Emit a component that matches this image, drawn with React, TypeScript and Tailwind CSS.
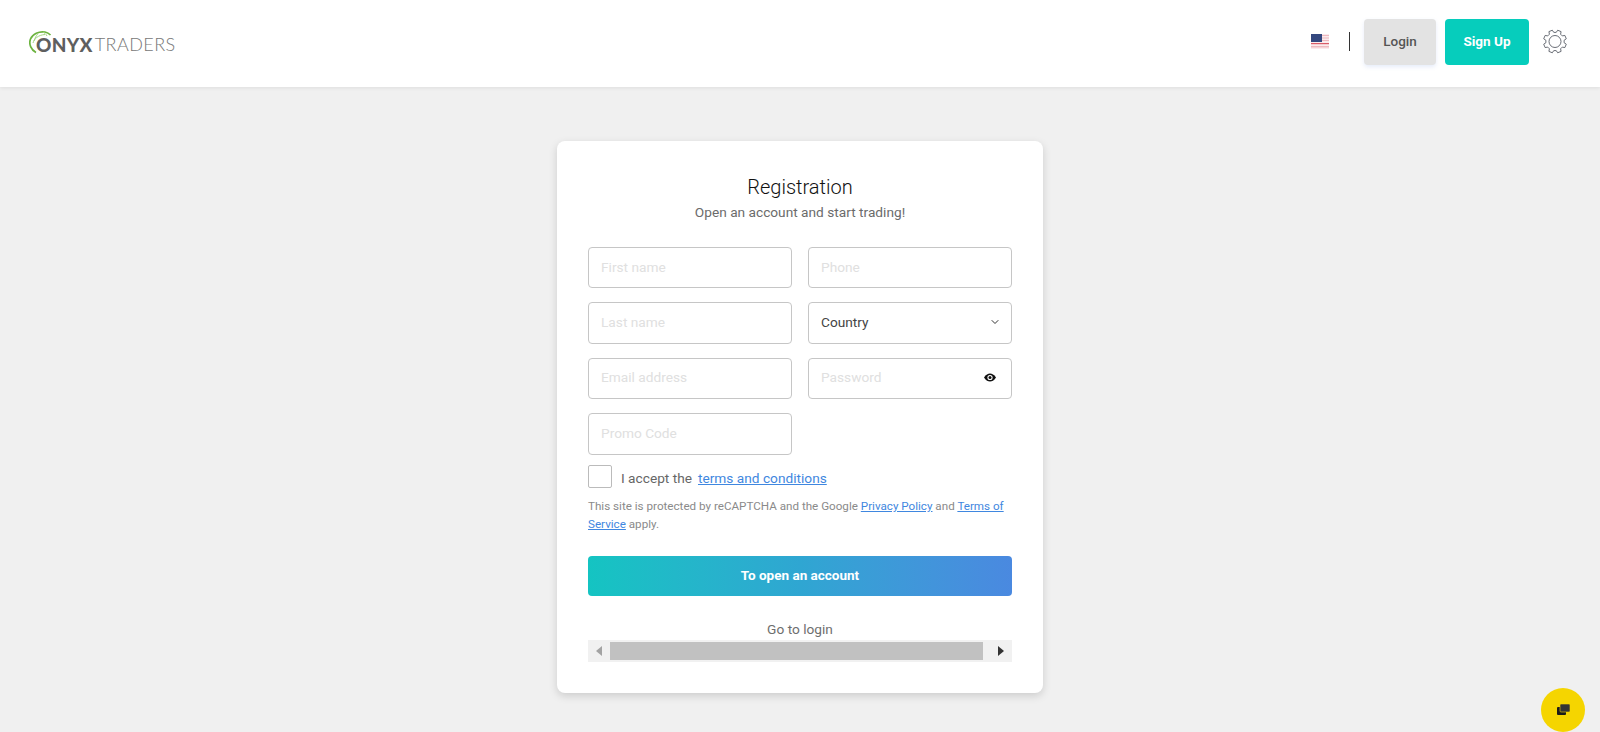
import { ChevronDown } from 'lucide-react';

const inputClass =
  'w-full h-[41.4px] rounded-[4px] border border-[#c6c6c6] bg-white px-3 pb-[2px] text-[13.7px] text-[#333] placeholder:text-[#e0e0e0] outline-none';

// 8 teeth gear outline, drawn around 12,12
const gearPoints = Array.from({ length: 8 }, (_, i) => {
  const a = (i * Math.PI) / 4 - Math.PI / 8;
  const pt = (r: number, d: number) =>
    `${(12 + r * Math.cos(a + d)).toFixed(2)} ${(12 + r * Math.sin(a + d)).toFixed(2)}`;
  return `${pt(9.2, -0.26)} L${pt(11.6, -0.16)} L${pt(11.6, 0.16)} L${pt(9.2, 0.26)}`;
}).join(' L');

function Gear() {
  return (
    <svg className="ml-[14px]" width="24" height="25" viewBox="0 0 24 24" fill="none" stroke="#5a5f68" strokeWidth="0.9" strokeLinejoin="round">
      <path d={`M${gearPoints} Z`} />
      <circle cx="12" cy="12" r="6" />
    </svg>
  );
}

function Logo() {
  return (
    <div className="relative flex items-center h-[24px] mt-[1px] pl-[7px] font-['Lato',sans-serif] text-[19px] leading-none">
      <svg className="absolute left-[0px] top-[-2px]" width="26" height="26" viewBox="0 0 26 26" fill="none">
        <path d="M7 22.500C2 20 -0.500 14 1.500 9 3.500 4 10 1 16 2c2.500 0.500 4 1.500 5.500 3" stroke="#6cb33f" strokeWidth="1.700" />
        <path d="M4 13c1-4 5-8 12-8.500M9 3.500C7 6 6 8 5 11M14 2c1.500 1 3 2 4 4" stroke="#a4d583" strokeWidth="1" />
      </svg>
      <span className="font-black text-[#5f5f5f] tracking-[0.3px]">ONYX</span>
      <span className="ml-[2px] text-[18px] font-light tracking-[0.45px] text-[#777]">TRADERS</span>
    </div>
  );
}

function Flag() {
  return (
    <svg width="18" height="15" viewBox="0 0 18 15">
      <rect width="18" height="15" fill="#fbeaec" />
      <rect y="1" width="18" height="1" fill="#eeb9bf" />
      <rect y="3.500" width="18" height="1" fill="#eeb9bf" />
      <rect y="6" width="18" height="1" fill="#eeb9bf" />
      <rect y="9" width="18" height="1.200" fill="#d95c68" />
      <rect y="12" width="18" height="1.500" fill="#eeb9bf" />
      <rect width="11" height="8" fill="#34487f" />
    </svg>
  );
}

function EyeIcon() {
  return (
    <svg className="absolute right-[16px] top-[14px]" width="12" height="11" viewBox="0 0 12 11">
      <path d="M0 5.500C2 2.500 4 1.500 6 1.500s4 1 6 4c-2 3-4 4-6 4s-4-1-6-4z" fill="#111" />
      <circle cx="6" cy="5.500" r="2.600" fill="#fff" />
      <circle cx="6" cy="5.500" r="1.500" fill="#111" />
    </svg>
  );
}

export default function App() {
  return (
    <div className="min-h-[732px] bg-[#f0f0f0] font-['Roboto',sans-serif] overflow-hidden">
      <header className="h-[87px] bg-white shadow-[0_1px_4px_rgba(0,0,0,0.08)] flex items-center pl-[29px] pr-[33px]">
        <Logo />
        <div className="ml-auto flex items-center mb-[4px]">
          <Flag />
          <div className="ml-[20px] h-[19px] w-px bg-[#333]" />
          <button className="ml-[14px] w-[72px] h-[46px] rounded-[4px] bg-[#e3e3e3] text-[13.5px] font-medium text-[#555] shadow-[0_2px_4px_rgba(90,130,220,0.15)]">
            Login
          </button>
          <button className="ml-[9px] w-[84px] h-[46px] rounded-[4px] bg-[#06cdbc] text-[13.5px] font-bold text-white">
            Sign Up
          </button>
          <Gear />
        </div>
      </header>

      <main className="flex justify-center pt-[54px]">
        <div className="w-[486px] h-[552px] rounded-[8px] bg-white px-[31px] pt-[34px] shadow-[0_3px_8px_rgba(0,0,0,0.15)]">
          <h1 className="text-center text-[20px] font-light leading-[24px] text-[#111]">Registration</h1>
          <p className="mt-[3px] text-center text-[13.7px] leading-[20px] text-[#6b6b6b]">
            Open an account and start trading!
          </p>

          <div className="mt-[25px] grid grid-cols-[204px_204px] gap-x-4 gap-y-[14px]">
            <input className={inputClass} placeholder="First name" />
            <input className={inputClass} placeholder="Phone" />
            <input className={inputClass} placeholder="Last name" />
            <div className="w-full h-[41.4px] rounded-[4px] border border-[#c6c6c6] bg-white pl-3 pr-[10px] pb-[2px] flex items-center justify-between text-[13.7px] text-[#444]">
              Country
              <ChevronDown className="w-[12px] h-[12px] text-[#333]" />
            </div>
            <input className={inputClass} placeholder="Email address" />
            <div className="relative">
              <input className={inputClass} placeholder="Password" />
              <EyeIcon />
            </div>
            <input className={inputClass} placeholder="Promo Code" />
          </div>

          <div className="mt-[10px] flex items-center text-[13.7px] text-[#666]">
            <div className="w-[24px] h-[23px] rounded-[2px] border border-[#bbb] bg-white" />
            <span className="ml-[9px] pt-[3px]">I accept the</span>
            <a className="ml-[6px] pt-[3px] text-[#3f87e0] underline">terms and conditions</a>
          </div>

          <p className="mt-[9px] text-[11.65px] leading-[18px] text-[#8a8a8a]">
            This site is protected by reCAPTCHA and the Google <a className="text-[#3f87e0] underline">Privacy Policy</a> and{' '}
            <a className="text-[#3f87e0] underline">Terms of Service</a> apply.
          </p>

          <button className="mt-[23px] w-full h-[40px] rounded-[4px] bg-gradient-to-r from-[#14c4c2] via-[#2fa6d2] to-[#4a89e0] pb-[2px] text-[13.5px] font-bold text-white">
            To open an account
          </button>

          <div className="mt-[23px] text-center text-[13.7px] leading-[20px] text-[#6e6e6e]">Go to login</div>

          <div className="mt-[1px] h-[22px] bg-[#f1f1f1] flex items-center">
            <div className="w-[22px] flex justify-center">
              <svg width="6" height="10" viewBox="0 0 6 10"><path d="M6 0v10L0 5z" fill="#a3a3a3" /></svg>
            </div>
            <div className="h-[18px] flex-1 bg-[#c1c1c1]" />
            <div className="w-[29px] flex justify-center pl-[6px]">
              <svg width="6" height="10" viewBox="0 0 6 10"><path d="M0 0v10l6-5z" fill="#333" /></svg>
            </div>
          </div>
        </div>
      </main>

      <button className="fixed right-[15px] bottom-[0px] w-[44px] h-[44px] rounded-full bg-[#f5d500] flex items-center justify-center">
        <svg width="13" height="12" viewBox="0 0 13 12">
          <rect x="0" y="3" width="9" height="8" rx="1" fill="#1a1a1a" />
          <rect x="3" y="0" width="10" height="8" rx="1" fill="#333" stroke="#f5d500" strokeWidth="0.6" />
        </svg>
      </button>
    </div>
  );
}
